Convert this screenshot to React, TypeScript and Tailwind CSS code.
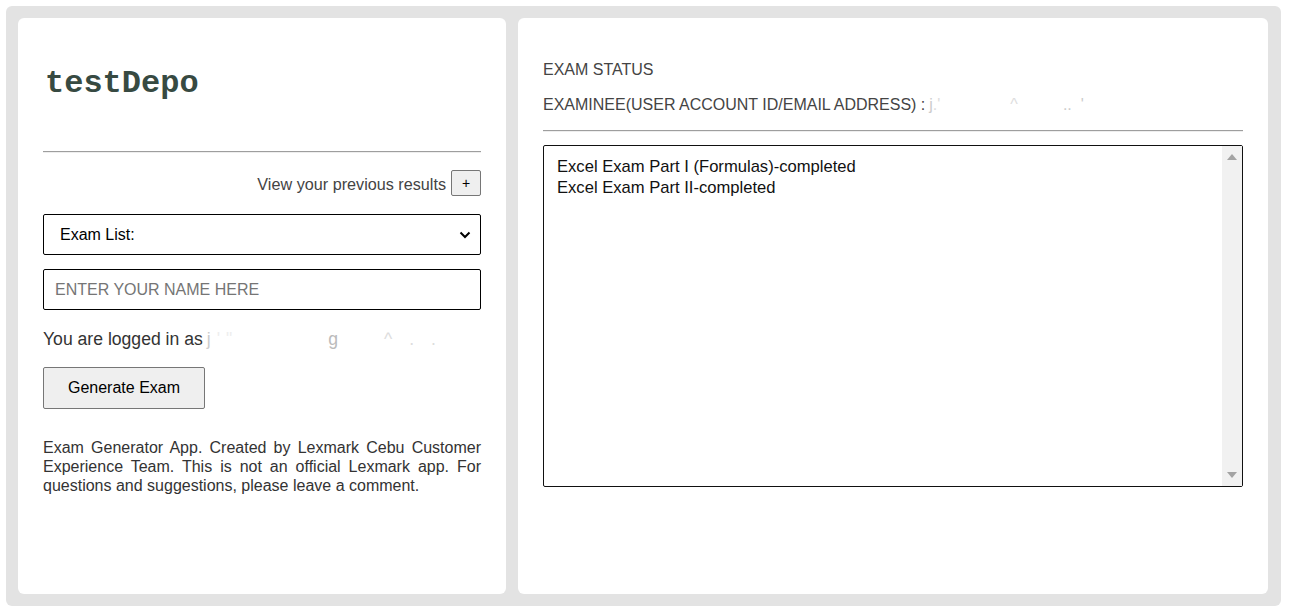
import React from "react";

const sans = { fontFamily: '"Liberation Sans", Arial, sans-serif' };

export default function App() {
  return (
    <div className="w-[1289px] h-[612px] bg-white pt-[6px] pl-[6px]" style={sans}>
      <div className="w-[1275px] h-[600px] bg-[#e3e3e3] rounded-[6px] p-[12px] flex gap-[12px]">
        {/* Left card */}
        <div className="w-[488px] h-[576px] bg-white rounded-[6px] px-[25px] pt-[50px] flex flex-col">
          <h1
            className="text-[32px] leading-[32px] font-bold text-[#374a42] pl-[2px]"
            style={{ fontFamily: '"Liberation Mono", "Courier New", monospace' }}
          >
            testDepo
          </h1>
          <div className="mt-[51px] border-t border-[#9e9e9e] border-b border-b-[#eeeeee] h-[2px]" />
          <div className="mt-[17px] flex justify-end items-center gap-[5px]">
            <span className="text-[16.2px] text-[#444] pt-[2px]">View your previous results</span>
            <button className="w-[30px] h-[26px] bg-[#efefef] border border-[#767676] rounded-[2px] text-[14px] text-black leading-none">
              +
            </button>
          </div>
          <div className="mt-[18px] h-[41px] border border-black rounded-[2px] flex items-center justify-between pl-[16px] pr-[9px]">
            <span className="text-[16px] text-black">Exam List:</span>
            <svg width="12" height="8" viewBox="0 0 12 8">
              <path d="M1.5 1.5 L6 6 L10.5 1.5" stroke="#000" strokeWidth="2" fill="none" />
            </svg>
          </div>
          <div className="mt-[14px] h-[41px] border border-black rounded-[2px] flex items-center pl-[11px]">
            <span className="text-[16px] text-[#757575]">ENTER YOUR NAME HERE</span>
          </div>
          <div className="mt-[18px] h-[22px] flex items-center text-[17.6px] text-[#333]">
            <span>You are logged in as</span>
            <span className="ml-[4px] text-[#ccc] tracking-[6px]">
              j<span className="text-[#eee]">'"</span>
              <span className="ml-[90px] text-[#bbb]">g</span>
              <span className="ml-[40px] text-[#ddd]">^ . .</span>
            </span>
          </div>
          <button className="mt-[17px] w-[162px] h-[42px] bg-[#efefef] border border-[#767676] rounded-[2px] text-[16px] text-black">
            Generate Exam
          </button>
          <p className="mt-[29px] text-[16px] leading-[19px] text-[#333] text-justify">
            Exam Generator App. Created by Lexmark Cebu Customer Experience Team. This is not an official Lexmark app. For questions and suggestions, please leave a comment.
          </p>
        </div>

        {/* Right card */}
        <div className="w-[750px] h-[576px] bg-white rounded-[6px] px-[25px] pt-[42px] flex flex-col">
          <div className="text-[16px] leading-[19px] text-[#444]">EXAM STATUS</div>
          <div className="mt-[16px] text-[16px] leading-[19px] text-[#444] flex">
            <span>EXAMINEE(USER ACCOUNT ID/EMAIL ADDRESS) :</span>
            <span className="ml-[4px] text-[#ccc]">j<span className="text-[#ddd]">.'</span></span>
            <span className="ml-[70px] text-[#ddd]">^</span>
            <span className="ml-[45px] text-[#ccc]">..&nbsp;&nbsp;'</span>
          </div>
          <div className="mt-[16px] border-t border-[#9e9e9e] border-b border-b-[#eeeeee] h-[2px]" />
          <div className="mt-[13px] h-[342px] border border-[#111] rounded-[2px] flex">
            <div className="flex-1 pl-[13px] pt-[10px] text-[16.6px] leading-[21px] text-[#111]">
              <div>Excel Exam Part I (Formulas)-completed</div>
              <div>Excel Exam Part II-completed</div>
            </div>
            <div className="w-[20px] bg-[#f1f1f1] flex flex-col items-center justify-between py-[8px]">
              <svg width="10" height="6" viewBox="0 0 10 6">
                <path d="M0 6 L5 0 L10 6 Z" fill="#a3a3a3" />
              </svg>
              <svg width="10" height="6" viewBox="0 0 10 6">
                <path d="M0 0 L5 6 L10 0 Z" fill="#a3a3a3" />
              </svg>
            </div>
          </div>
        </div>
      </div>
    </div>
  );
}
